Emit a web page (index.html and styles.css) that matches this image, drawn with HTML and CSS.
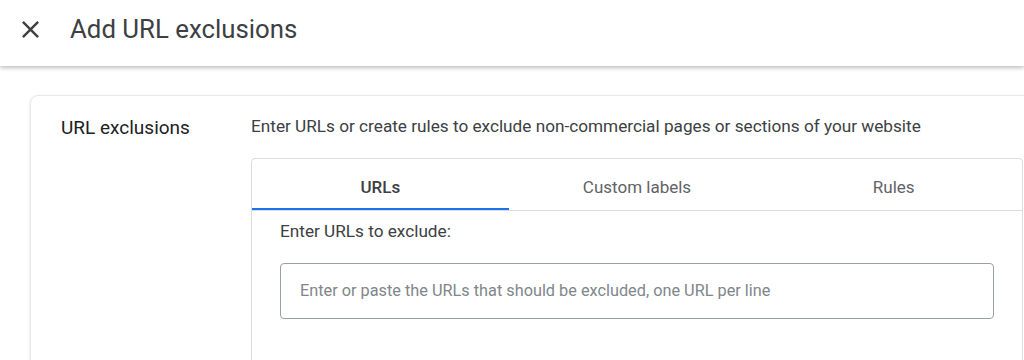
FILE: index.html
```html
<!DOCTYPE html>
<html lang="en">
<head>
    <meta charset="UTF-8">
    <meta name="viewport" content="width=device-width, initial-scale=1.0">
    <title>Add URL exclusions</title>
    <link rel="stylesheet" href="styles.css">
</head>
<body>
    <!-- Header -->
    <header class="header">
        <button class="close-btn" aria-label="Close">
            <svg width="29" height="29" viewBox="0 0 24 24">
                <path d="M19 6.41L17.59 5 12 10.59 6.41 5 5 6.41 10.59 12 5 17.59 6.41 19 12 13.41 17.59 19 19 17.59 13.41 12z" fill="#3c4043"/>
            </svg>
        </button>
        <h1>Add URL exclusions</h1>
    </header>

    <main class="page">
        <div class="card">
            <div class="card-label">URL exclusions</div>

            <div class="card-body">
                <p class="description">Enter URLs or create rules to exclude non-commercial pages or sections of your website</p>

                <div class="tabs-box">
                    <div class="tab-bar">
                        <div class="tab active">URLs</div>
                        <div class="tab">Custom labels</div>
                        <div class="tab">Rules</div>
                    </div>

                    <div class="tab-panel">
                        <label for="urls" class="panel-label">Enter URLs to exclude:</label>
                        <textarea id="urls" class="url-input" rows="1" placeholder="Enter or paste the URLs that should be excluded, one URL per line"></textarea>
                    </div>
                </div>
            </div>
        </div>
    </main>
</body>
</html>
```

FILE: styles.css
```css
:root {
    --text-dark: #202124;
    --text-main: #3c4043;
    --text-muted: #5f6368;
    --border-color: #dadce0;
    --blue: #1a73e8;
}

* {
    margin: 0;
    padding: 0;
    box-sizing: border-box;
    font-family: 'Roboto', 'Liberation Sans', sans-serif;
}

body {
    background-color: white;
    width: 1024px;
    height: 360px;
    overflow: hidden;
}

.header {
    height: 66px;
    display: flex;
    align-items: center;
    background-color: white;
    box-shadow: 0 2px 4px rgba(0,0,0,0.25);
    position: relative;
    z-index: 1;
}

.close-btn {
    width: 29px;
    height: 29px;
    margin-left: 16px;
    margin-right: 25px;
    margin-top: -8px;
    border: none;
    background: none;
    display: flex;
    cursor: pointer;
}

.header h1 {
    font-size: 25.8px;
    font-weight: 400;
    color: var(--text-main);
    margin-top: -9px;
}

.page {
    padding: 29px 0 0 30px;
}

.card {
    width: 1024px;
    display: flex;
    padding: 18px 30px;
    border: 1px solid #e8e8e8;
    border-radius: 8px;
    box-shadow: 0 1px 3px rgba(0,0,0,0.12);
    min-height: 320px;
}

.card-label {
    width: 190px;
    flex-shrink: 0;
    font-size: 19px;
    line-height: 28px;
    font-weight: 400;
    color: var(--text-dark);
}

.card-body {
    flex: 1;
}

.description {
    font-size: 17.2px;
    line-height: 24px;
    color: var(--text-main);
    margin-bottom: 20px;
}

.tabs-box {
    border: 1px solid var(--border-color);
    border-radius: 4px;
}

.tab-bar {
    display: flex;
    border-bottom: 1px solid var(--border-color);
}

.tab {
    flex: 1;
    height: 51px;
    display: flex;
    align-items: center;
    justify-content: center;
    font-size: 17px;
    color: var(--text-muted);
    border-bottom: 2px solid transparent;
    padding-top: 6px;
}

.tab.active {
    color: var(--text-main);
    font-weight: 500;
    border-bottom-color: var(--blue);
}

.tab-panel {
    padding: 8px 28px 60px 28px;
}

.panel-label {
    display: block;
    font-size: 17.2px;
    line-height: 24px;
    color: var(--text-main);
    margin-bottom: 20px;
}

.url-input {
    display: block;
    width: 100%;
    height: 56px;
    border: 1px solid #9aa0a6;
    border-radius: 4px;
    padding: 16px 19px;
    font-size: 16.3px;
    line-height: 22px;
    color: var(--text-main);
    resize: none;
    overflow: hidden;
}

.url-input::placeholder {
    color: #80868b;
}

.url-input:focus {
    outline: none;
    border-color: var(--blue);
}
```
